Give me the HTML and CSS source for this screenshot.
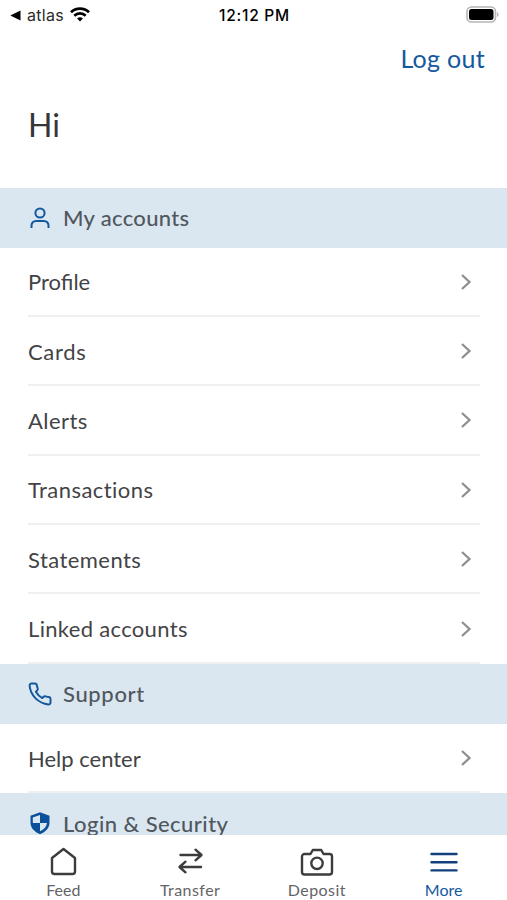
FILE: index.html
```html
<!DOCTYPE html>
<html lang="en">
<head>
    <meta charset="UTF-8">
    <meta name="viewport" content="width=device-width, initial-scale=1">
    <title>More</title>
    <link rel="stylesheet" href="styles.css">
</head>
<body>
    <div class="app">
        <!-- Status bar -->
        <div class="status-bar">
            <div class="status-left">
                <svg width="11" height="11" viewBox="0 0 11 11"><path d="M0.3 5.5L10.5 0.6v9.8z"/></svg>
                <span class="back-app">atlas</span>
                <svg class="wifi" width="20" height="15" viewBox="0 0 20 15" fill="none" stroke="#000" stroke-width="2.7">
                    <path d="M1 5.3a12.8 12.8 0 0 1 18 0"/>
                    <path d="M4.3 8.7a8.1 8.1 0 0 1 11.4 0"/>
                    <path d="M10 14.5l-2.9-2.9a4.1 4.1 0 0 1 5.8 0z" fill="#000" stroke="none"/>
                </svg>
            </div>
            <div class="status-time">12:12 PM</div>
            <svg class="battery" width="33" height="17" viewBox="0 0 33 17">
                <rect x="1" y="1" width="28.5" height="15" rx="4.5" fill="none" stroke="#b5b5b5" stroke-width="1.6"/>
                <rect x="3" y="3" width="24.5" height="11" rx="2.5"/>
                <path d="M31 6v5c2-.8 2-4.200 0-5z" fill="#b5b5b5"/>
            </svg>
        </div>

        <!-- Header -->
        <header class="header">
            <a class="logout">Log out</a>
            <h1 class="greeting">Hi</h1>
        </header>

        <!-- Menu -->
        <main class="menu">
            <h2 class="section-title">
                <svg width="24" height="24" viewBox="0 0 24 24" fill="none" stroke="#14599e" stroke-width="2">
                    <circle cx="12" cy="7" r="4.600"/>
                    <path d="M3.500 22v-2.500a4.500 4.500 0 0 1 4.500-4.500h8a4.500 4.500 0 0 1 4.500 4.500v2.500"/>
                </svg>
                <span class="spaced-sm">My accounts</span>
            </h2>
            <ul class="menu-list">
                <li><span>Profile</span><svg class="chevron" viewBox="0 0 12 18"><path d="M2 2l7.500 7L2 16"/></svg></li>
                <li><span class="spaced-lg">Cards</span><svg class="chevron" viewBox="0 0 12 18"><path d="M2 2l7.500 7L2 16"/></svg></li>
                <li><span class="spaced">Alerts</span><svg class="chevron" viewBox="0 0 12 18"><path d="M2 2l7.500 7L2 16"/></svg></li>
                <li><span class="spaced">Transactions</span><svg class="chevron" viewBox="0 0 12 18"><path d="M2 2l7.500 7L2 16"/></svg></li>
                <li><span class="spaced">Statements</span><svg class="chevron" viewBox="0 0 12 18"><path d="M2 2l7.500 7L2 16"/></svg></li>
                <li><span class="spaced-sm">Linked accounts</span><svg class="chevron" viewBox="0 0 12 18"><path d="M2 2l7.500 7L2 16"/></svg></li>
            </ul>

            <h2 class="section-title">
                <svg width="24" height="24" viewBox="0 0 24 24" fill="none" stroke="#14599e" stroke-width="2" stroke-linejoin="round">
                    <path d="M22.500 17.200v3.200a2 2 0 0 1-2.200 2C10.500 21.500 2.500 13.500 1.600 3.700a2 2 0 0 1 2-2.200h3.200a2.100 2.100 0 0 1 2.100 1.800c.15 1 .4 2 .75 2.900.3.800.1 1.600-.45 2.200L7.900 9.700c1.500 2.700 3.700 4.900 6.400 6.400l1.300-1.300c.6-.6 1.400-.75 2.200-.45.95.35 1.900.6 2.900.75a2.100 2.100 0 0 1 1.800 2.100z"/>
                </svg>
                <span class="spaced-lg">Support</span>
            </h2>
            <ul class="menu-list">
                <li><span>Help center</span><svg class="chevron" viewBox="0 0 12 18"><path d="M2 2l7.500 7L2 16"/></svg></li>
            </ul>

            <h2 class="section-title">
                <svg width="24" height="24" viewBox="0 0 24 24">
                    <path d="M12 1.300l9.500 3.500v6.700c0 5.200-3.700 9.400-9.500 11.700C6.200 20.900 2.500 16.700 2.500 11.500V4.800z" fill="#0b509a"/>
                    <path d="M12 4v8H4.900c-.1-.5-.1-1-.1-1.500V6.500z" fill="#dbe7f0"/>
                    <path d="M12 12v8.300c3.900-1.800 6.400-4.500 7-8.300z" fill="#dbe7f0"/>
                </svg>
                <span class="spaced">Login &amp; Security</span>
            </h2>
        </main>

        <!-- Tab bar -->
        <nav class="tab-bar">
            <a class="tab">
                <svg width="34" height="30" viewBox="0 0 34 30">
                    <path d="M6 11L17.500 2L29 11v13.500a2.500 2.500 0 0 1-2.500 2.500h-18a2.500 2.500 0 0 1-2.500-2.500z"/>
                </svg>
                <span>Feed</span>
            </a>
            <a class="tab">
                <svg width="34" height="30" viewBox="0 0 34 30">
                    <path d="M7.500 8h20.500M22.500 2.700L28.500 8l-6 5.300M28 20H7M12.500 14.700L6.500 20l6 5.300"/>
                </svg>
                <span class="spaced">Transfer</span>
            </a>
            <a class="tab">
                <svg width="34" height="30" viewBox="0 0 34 30">
                    <path d="M4.500 7h6l2.300-4h8.400l2.300 4h6a2.500 2.500 0 0 1 2.500 2.500v15.500a2.500 2.500 0 0 1-2.500 2.500h-25a2.500 2.500 0 0 1-2.500-2.500V9.500a2.500 2.500 0 0 1 2.500-2.500z"/>
                    <circle cx="17" cy="16.300" r="5.700"/>
                </svg>
                <span class="spaced">Deposit</span>
            </a>
            <a class="tab active">
                <svg width="34" height="30" viewBox="0 0 34 30">
                    <path d="M4.500 7h25M4.500 15.200h25M4.500 23.400h25"/>
                </svg>
                <span>More</span>
            </a>
        </nav>
    </div>
</body>
</html>
```
FILE: styles.css
```css
* {
    box-sizing: border-box;
}
body {
    margin: 0;
    background: #fff;
    color: #434345;
    font-family: Lato, "Open Sans", sans-serif;
}
.app {
    height: 900px;
    display: flex;
    flex-direction: column;
    overflow: hidden;
}
.spaced-sm {
    letter-spacing: 0.33px;
}
.spaced {
    letter-spacing: 0.45px;
}
.spaced-lg {
    letter-spacing: 0.65px;
}

/* status bar */
.status-bar {
    flex: none;
    height: 30px;
    padding: 0 8px 0 10px;
    display: grid;
    grid-template-columns: 1fr auto 1fr;
    align-items: center;
    font-family: Inter, sans-serif;
    color: #000;
}
.status-left {
    display: flex;
    align-items: center;
}
.back-app {
    margin: 0 6px 0 6px;
    font-size: 16px;
    letter-spacing: 0.3px;
    color: #2a2a2a;
}
.wifi {
    margin-bottom: 2px;
}
.status-time {
    font-size: 15.5px;
    font-weight: 500;
    letter-spacing: 0.75px;
}
.battery {
    justify-self: end;
    margin-bottom: 2px;
}

/* header */
.header {
    flex: none;
    height: 157.5px;
    padding: 13px 22px 0 28px;
    display: flex;
    flex-direction: column;
}
.logout {
    align-self: flex-end;
    font-size: 25px;
    line-height: 30px;
    letter-spacing: 0.3px;
    color: #14599e;
}
.greeting {
    margin: 32px 0 0;
    font-size: 32px;
    line-height: 40px;
    font-weight: 400;
    color: #363638;
}

/* menu */
.menu {
    flex: 1;
    min-height: 0;
    overflow: hidden;
}
.section-title {
    display: flex;
    align-items: center;
    gap: 11px;
    height: 60px;
    margin: 0;
    padding: 0 28px;
    background: #dbe7f0;
    font-size: 22px;
    font-weight: 500;
    color: #50575e;
}
.menu-list {
    margin: 0;
    padding: 0 27px 0 28px;
    list-style: none;
}
.menu-list li {
    display: flex;
    align-items: center;
    justify-content: space-between;
    height: 69.4px;
    padding: 1px 8px 0 0;
    border-bottom: 2px solid #eff0f1;
    font-size: 22px;
}
.chevron {
    width: 12px;
    height: 18px;
    fill: none;
    stroke: #8f8f8f;
    stroke-width: 2.3;
}

/* tab bar */
.tab-bar {
    flex: none;
    height: 65.5px;
    padding-top: 12px;
    display: grid;
    grid-template-columns: repeat(4, 1fr);
    background: #fff;
}
.tab {
    display: flex;
    flex-direction: column;
    align-items: center;
    font-size: 16px;
    line-height: 20px;
    color: #646466;
}
.tab svg {
    margin-bottom: 3px;
    fill: none;
    stroke: #3c3c3e;
    stroke-width: 2.4;
    stroke-linecap: round;
    stroke-linejoin: round;
}
.tab.active {
    color: #14599e;
}
.tab.active svg {
    stroke: #123f7c;
}
```
